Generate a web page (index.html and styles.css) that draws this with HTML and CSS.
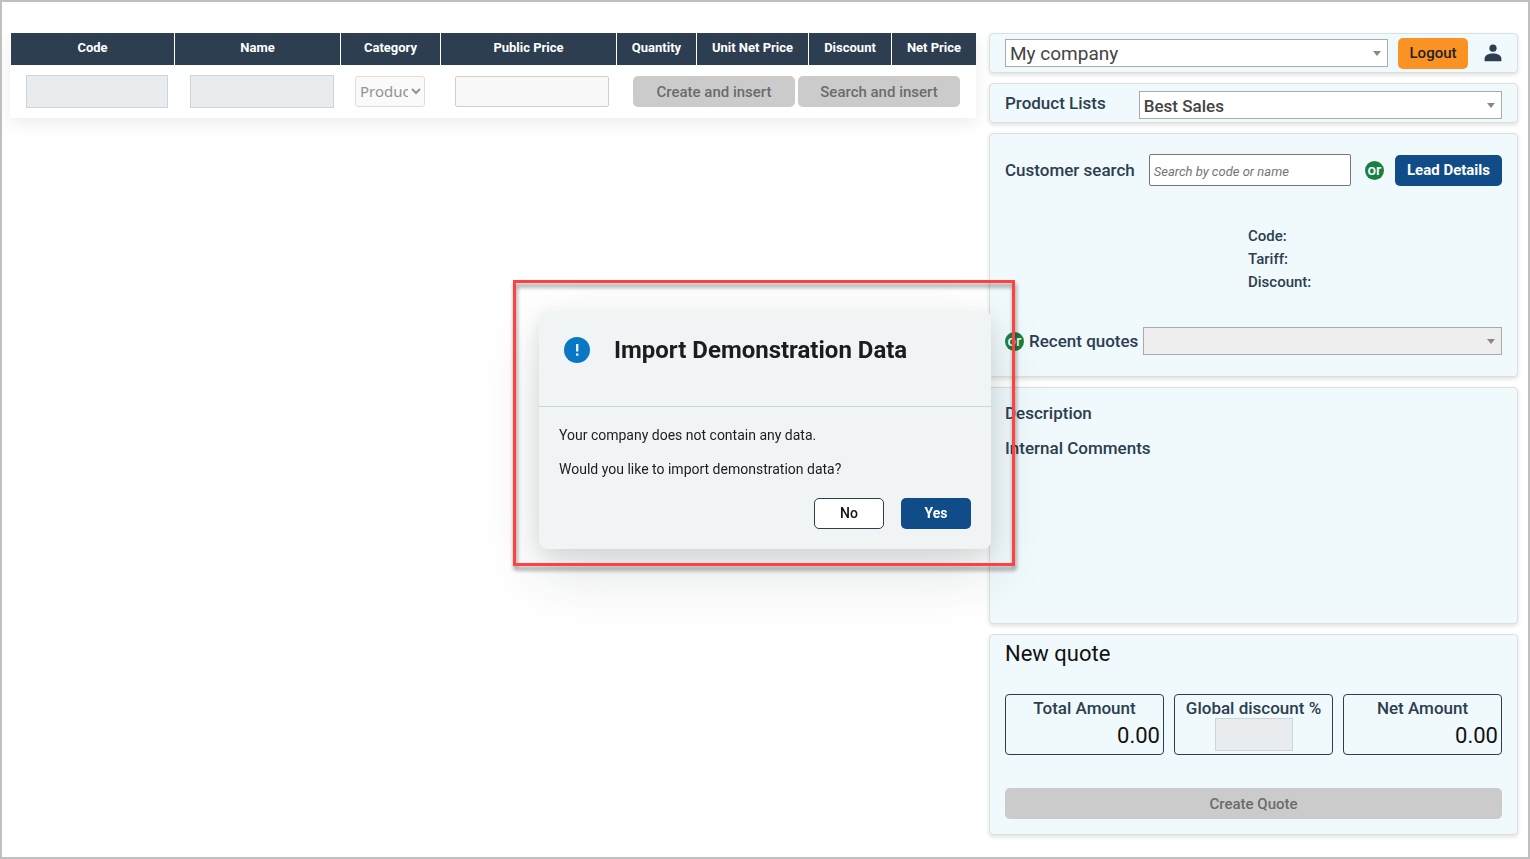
FILE: index.html
```html
<!DOCTYPE html>
<html lang="en">
<head>
<meta charset="utf-8">
<title>Quotes</title>
<link rel="stylesheet" href="styles.css">
</head>
<body>
<main class="page">
  <section class="lines">
    <table class="grid">
      <colgroup>
        <col class="c-code"><col class="c-name"><col class="c-cat"><col class="c-price">
        <col class="c-qty"><col class="c-unit"><col class="c-disc"><col class="c-net">
      </colgroup>
      <thead>
        <tr><th>Code</th><th>Name</th><th>Category</th><th>Public Price</th><th>Quantity</th><th>Unit Net Price</th><th>Discount</th><th>Net Price</th></tr>
      </thead>
      <tbody>
        <tr>
          <td><input class="field tall" type="text" aria-label="Code" disabled></td>
          <td><input class="field tall" type="text" aria-label="Name" disabled></td>
          <td class="narrow-cell"><select class="category" aria-label="Category" disabled><option>Product</option></select></td>
          <td class="narrow-cell"><input class="field price" type="text" aria-label="Public Price" disabled></td>
          <td colspan="4" class="actions-cell">
            <div class="actions">
              <button class="btn btn-off" type="button" disabled>Create and insert</button>
              <button class="btn btn-off" type="button" disabled>Search and insert</button>
            </div>
          </td>
        </tr>
      </tbody>
    </table>
  </section>

  <aside class="side">
    <section class="card account">
      <div class="picker picker-large"><select aria-label="Company"><option>My company</option></select></div>
      <button class="btn btn-logout" type="button">Logout</button>
      <button class="user" type="button" aria-label="User">
        <svg width="18" height="18" viewBox="0 0 18 18" fill="#2c3e50"><circle cx="9" cy="4.2" r="3.6"/><path d="M.6 17.2v-2.4C.6 11.400 4.600 9.600 9 9.600s8.400 1.800 8.400 5.200v2.400z"/></svg>
      </button>
    </section>

    <section class="card lists">
      <label class="label" for="lists">Product Lists</label>
      <div class="picker"><select id="lists"><option>Best Sales</option></select></div>
    </section>

    <section class="card customer">
      <div class="search-row">
        <label class="label" for="customer">Customer search</label>
        <input id="customer" class="search" type="text" placeholder="Search by code or name">
        <span class="or">or</span>
        <button class="btn btn-primary lead" type="button">Lead Details</button>
      </div>
      <div class="info">
        <span>Code:</span>
        <span>Tariff:</span>
        <span>Discount:</span>
      </div>
      <div class="recent-row">
        <span class="or">or</span>
        <label class="label" for="recent">Recent quotes</label>
        <div class="picker picker-off"><select id="recent" disabled><option></option></select></div>
      </div>
    </section>

    <section class="card notes">
      <div class="label">Description</div>
      <div class="label">Internal Comments</div>
    </section>

    <section class="card quote">
      <h2 class="quote-title">New quote</h2>
      <div class="totals">
        <div class="total"><span class="label">Total Amount</span><span class="amount">0.00</span></div>
        <div class="total"><label class="label" for="discount">Global discount %</label><input id="discount" class="field discount" type="text" disabled></div>
        <div class="total"><span class="label">Net Amount</span><span class="amount">0.00</span></div>
      </div>
      <button class="btn btn-off" type="button" disabled>Create Quote</button>
    </section>
  </aside>
</main>

<div class="overlay">
  <div class="dialog" role="dialog" aria-labelledby="dialog-title">
    <header class="dialog-head">
      <svg class="dialog-icon" width="26" height="26" viewBox="0 0 26 26"><circle cx="13" cy="13" r="13" fill="#0a77c5"/><path d="M12 7h2.400v7.400h-2.400zM12 16.600h2.400v2.200h-2.400z" fill="#e8f3f8"/></svg>
      <h1 id="dialog-title" class="dialog-title">Import Demonstration Data</h1>
    </header>
    <div class="dialog-body">
      <p>Your company does not contain any data.</p>
      <p>Would you like to import demonstration data?</p>
      <div class="dialog-actions">
        <button class="btn btn-plain" type="button">No</button>
        <button class="btn btn-primary" type="button">Yes</button>
      </div>
    </div>
  </div>
</div>
</body>
</html>
```

FILE: styles.css
```css
* { box-sizing: border-box; }

body {
  margin: 0;
  min-height: 100vh;
  border: 2px solid #bfbfbf;
  background: #fff;
  color: #2c3e50;
  font-family: Roboto, "Liberation Sans", sans-serif;
  font-size: 15px;
}

button, input, select { font-family: inherit; margin: 0; }

.page {
  display: grid;
  grid-template-columns: minmax(0, 966fr) minmax(0, 529fr);
  gap: 13px;
  align-items: start;
  padding: 31px 10px 20px 8px;
}

/* Quote lines */
.lines {
  padding-left: 1px;
  background: #fff;
  box-shadow: 0 5px 16px rgba(0, 0, 0, 0.08);
  clip-path: inset(0 -12px -24px -8px);
}

.grid { width: 100%; table-layout: fixed; border-collapse: separate; border-spacing: 0; }
.c-code { width: 164px; }
.c-name { width: 166px; }
.c-cat { width: 100px; }
.c-price { width: 176px; }
.c-qty { width: 80px; }
.c-unit { width: 112px; }
.c-disc { width: 83px; }
.c-net { width: 84px; }

.grid th {
  height: 32px;
  padding: 0 0 3px;
  border-right: 1px solid #fff;
  background: #2c3e50;
  color: #fff;
  font-size: 13px;
  font-weight: 700;
  white-space: nowrap;
}
.grid th:last-child { border-right: 0; }
.grid td { height: 53px; padding: 0 7px 0 15px; vertical-align: middle; }
.grid .narrow-cell { padding-left: 14px; }
.grid .actions-cell { padding: 0 16px; }

.field {
  display: block;
  width: 100%;
  border: 1px solid #ced4da;
  background: #e9ecef;
  padding: 0 4px;
}
.tall { height: 33px; }
.price { height: 31px; width: 154px; border-color: #cfcfcf; border-radius: 2px; background: #f8f8f8; }

.category {
  display: block;
  width: 70px;
  height: 31px;
  padding: 0 0 2px;
  border: 1px solid #cfcfcf;
  border-radius: 3px;
  background: #f8f8f8;
  color: #666;
  font-family: "Noto Sans", "Open Sans", sans-serif;
  font-size: 15px;
}

.actions { display: flex; gap: 3px; }
.actions .btn { flex: 1; }

.btn {
  height: 31px;
  padding: 0;
  border: 0;
  border-radius: 5px;
  font-size: 15px;
  font-weight: 500;
}
.btn-off { background: #cbcbcb; color: #6b6b6b; }
.btn-primary { background: #0f4c88; color: #fff; font-weight: 700; }
.btn-plain { border: 1px solid #2c3e50; background: #fff; color: #111; }
.btn-logout { width: 70px; background: #fb9224; color: #222; }

/* Side cards */
.side { display: flex; flex-direction: column; gap: 10px; }

.card {
  border: 1px solid #dcdfe0;
  border-radius: 4px;
  background: #f0f9fc;
  padding: 0 15px;
  box-shadow: 0 2px 4px rgba(0, 0, 0, 0.12);
}

.label { font-size: 17px; line-height: 20px; font-weight: 500; white-space: nowrap; }

.account { display: flex; align-items: center; gap: 10px; height: 40px; }
.user { display: flex; padding: 0; margin: 0 0 0 6px; border: 0; background: none; }

.picker { position: relative; flex: 1; min-width: 0; }
.picker::after {
  content: "";
  position: absolute;
  right: 7px;
  top: 12px;
  border: 4px solid transparent;
  border-top: 5px solid #888;
  border-bottom: 0;
  pointer-events: none;
}
.picker select {
  display: block;
  width: 100%;
  height: 28px;
  padding: 2px 20px 0 4px;
  border: 1px solid #aaa;
  border-radius: 0;
  appearance: none;
  background: #fff;
  color: #444;
  font-size: 17px;
  font-weight: 500;
  opacity: 1;
}
.picker-large select { padding-top: 0; font-size: 19px; font-weight: 400; }
.picker-off select { background: #eee; }

.lists { display: flex; align-items: center; gap: 33px; height: 40px; }
.lists .picker { margin-top: 4px; }

.customer { display: flex; flex-direction: column; padding-top: 20px; padding-bottom: 21px; }
.search-row { display: flex; align-items: center; }
.search {
  flex: 1;
  min-width: 0;
  height: 32px;
  margin: 0 14px;
  padding: 2px 4px 0;
  border: 1px solid #767676;
  border-radius: 2px;
  background: #fff;
  font-size: 13px;
}
.search::placeholder { color: #757575; font-style: italic; }
.or {
  flex: none;
  width: 19px;
  height: 19px;
  border-radius: 50%;
  background: #198042;
  color: #fff;
  font-size: 15px;
  line-height: 18px;
  font-weight: 500;
  text-align: center;
}
.lead { width: 107px; margin-left: 11px; }

.info { display: grid; gap: 3px; margin: 40px 0 35px 243px; line-height: 20px; font-weight: 500; }
.recent-row { display: flex; align-items: center; gap: 5px; }

.notes { display: flex; flex-direction: column; gap: 15px; min-height: 237px; padding-top: 15px; }

.quote { display: flex; flex-direction: column; padding-bottom: 15px; }
.quote-title { margin: 5px 0 27px; color: #111; font-size: 22px; line-height: 27px; font-weight: 400; }
.totals { display: grid; grid-template-columns: repeat(3, 1fr); gap: 10px; margin-bottom: 33px; }
.total {
  display: flex;
  flex-direction: column;
  align-items: center;
  height: 61px;
  padding: 3px 3px 0;
  border: 1px solid #2c3e50;
  border-radius: 4px;
}
.amount { align-self: flex-end; color: #111; font-size: 22px; line-height: 36px; }
.discount { width: 78px; height: 33px; }

/* Dialog */
.overlay {
  position: fixed;
  inset: 0;
  display: flex;
  align-items: center;
  justify-content: center;
}
.dialog {
  position: relative;
  width: 452px;
  border-radius: 8px;
  background: #f0f4f5;
  color: #1c1c1c;
  box-shadow: 0 22px 60px rgba(30, 50, 50, 0.15), 0 6px 20px rgba(30, 50, 50, 0.1);
}
/* Red marker frame around the dialog */
.dialog::before {
  content: "";
  position: absolute;
  inset: -31px -24px -17px -26px;
  border: 3px solid #ff4141;
  filter: drop-shadow(1px 4px 2px rgba(0, 0, 0, 0.45));
  pointer-events: none;
}
.dialog-head {
  display: flex;
  gap: 24px;
  height: 96px;
  padding: 26px 25px 0;
  border-bottom: 1px solid #cbd4da;
}
.dialog-title { margin: 0; font-size: 24px; line-height: 26px; font-weight: 700; white-space: nowrap; }
.dialog-body { padding: 18px 20px 20px; }
.dialog-body p { margin: 0 0 14px; font-size: 14px; line-height: 20px; }
.dialog-actions { display: flex; justify-content: flex-end; gap: 17px; margin-top: 19px; }
.dialog-actions .btn { width: 70px; font-size: 14px; }
```
